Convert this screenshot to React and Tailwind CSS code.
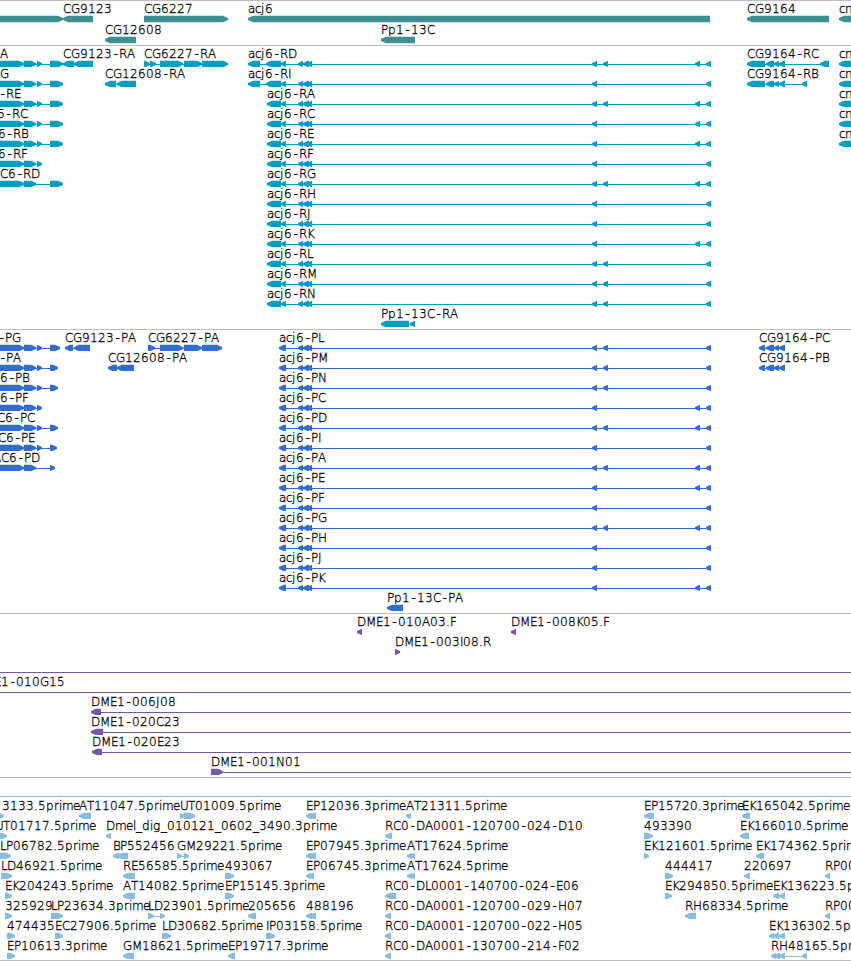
const LEFT = "left";
const RIGHT = "right";

// Horizontal advance of each label character, in pixels. Digits are 8.
const ADVANCE = {
  A: 8, B: 7, C: 8, D: 9, E: 7, F: 6, G: 9, H: 9, I: 3, J: 4, K: 7, L: 6, M: 10,
  N: 9, P: 7, R: 8, T: 7, U: 8, a: 7, c: 6, d: 8, e: 7, g: 8, i: 3, j: 4, l: 3,
  m: 11, n: 8, p: 8, r: 5, "-": 7, ".": 4, _: 6,
};

function charPositions(label, start) {
  let x = start;
  return [...label].map((char) => {
    // The hyphen is narrower than its slot, so it is centred in it.
    const current = char === "-" ? x + 1.5 : x;
    x += ADVANCE[char] ?? 8;
    return current;
  });
}

function left(label, x, ...blocks) {
  return { label, x, blocks, direction: LEFT };
}

function right(label, x, ...blocks) {
  return { label, x, blocks, direction: RIGHT };
}

const HEAD = [298, 303];
const MIDDLE = [[303, 309], [307, 312]];
const E1 = [592, 597];
const E2 = [603, 608];
const E3 = [695, 700];
const E4 = [706, 711];

function acj6Transcript(name, ...tail) {
  return left(`acj6-${name}`, 267, [267, 281], [281, 286], HEAD, ...MIDDLE, ...tail);
}

function acj6LongTranscript(name, ...tail) {
  return left(`acj6-${name}`, 248, [248, 260], [266, 281], [281, 286], HEAD, ...MIDDLE, ...tail);
}

function acj6Protein(name, ...tail) {
  return left(`acj6-${name}`, 279, [279, 286], [281, 286], HEAD, ...MIDDLE, ...tail);
}

const A = [-12, 24];
const B = [24, 36];
const C = [37, 42];

const cn = left("cn", 839, [839, 870]);

const genes = [
  [
    right("", 0, [-12, 63]),
    left("CG9123", 63, [63, 93]),
    right("CG6227", 144, [144, 228]),
    left("acj6", 248, [248, 710]),
    left("CG9164", 747, [747, 829]),
    cn,
  ],
  [left("CG12608", 105, [105, 136]), left("Pp1-13C", 381, [381, 415])],
];

const transcripts = [
  [
    right("A", 0, A, B, C, [50, 63]),
    left("CG9123-RA", 63, [63, 74], [74, 82], [78, 93]),
    right("CG6227-RA", 144, [144, 150], [150, 156], [160, 183], [184, 202], [202, 228]),
    acj6LongTranscript("RD", E1, E2, E3, E4),
    left("CG9164-RC", 747, [747, 765], [766, 774], [774, 779], [779, 785], [820, 829]),
    cn,
  ],
  [
    right("G", 0, A, B, C, [50, 63]),
    left("CG12608-RA", 105, [105, 116], [117, 125], [120, 136]),
    acj6LongTranscript("RI", E1, E4),
    left("CG9164-RB", 747, [747, 765], [766, 774], [774, 779], [779, 785], [802, 807]),
    cn,
  ],
  [right("-RE", -1, A, B, C, [50, 63]), acj6Transcript("RA", E1, E2, E3, E4), cn],
  [right("6-RC", -3, A, B, C, [50, 63]), acj6Transcript("RC", E1, E3, E4), cn],
  [right("6-RB", -2, A, B, C, [50, 63]), acj6Transcript("RE", E1, E3, E4), cn],
  [right("6-RF", -2, A, B, C), acj6Transcript("RF", E1, E4)],
  [right("AC6-RD", -8, A, B, [50, 63]), acj6Transcript("RG", E1, E2, E3, E4)],
  [acj6Transcript("RH", E1, E4)],
  [acj6Transcript("RJ", E1, E4)],
  [acj6Transcript("RK", E1, E3, E4)],
  [acj6Transcript("RL", E1, E2, E4)],
  [acj6Transcript("RM", E1, E2, E4)],
  [acj6Transcript("RN", E1, E2, E4)],
  [left("Pp1-13C-RA", 381, [381, 409], [410, 415])],
];

const proteins = [
  [
    right("-PG", -2, A, B, C, [50, 60]),
    left("CG9123-PA", 65, [65, 73], [74, 82], [78, 90]),
    right("CG6227-PA", 148, [148, 155], [160, 183], [184, 202], [202, 222]),
    acj6Protein("PL", E1, E2, E4),
    left("CG9164-PC", 759, [759, 765], [766, 774], [774, 779], [779, 785]),
  ],
  [
    right("-PA", -1, A, B, C, [50, 58]),
    left("CG12608-PA", 108, [108, 117], [117, 125], [121, 134]),
    acj6Protein("PM", E1, E2, E4),
    left("CG9164-PB", 759, [759, 765], [766, 774], [774, 779], [779, 785]),
  ],
  [right("6-PB", 0, A, B, C, [50, 58]), acj6Protein("PN", E1, E2, E4)],
  [right("6-PF", 0, A, B, C), acj6Protein("PC", E1, E3, E4)],
  [right("C6-PC", -3, A, B, C, [50, 58]), acj6Protein("PD", E1, E2, E3, E4)],
  [right("C6-PE", -2, A, B, C, [50, 57]), acj6Protein("PI", E1, E4)],
  [right("AC6-PD", -7, A, B, [50, 55]), acj6Protein("PA", E1, E2, E3, E4)],
  [acj6Protein("PE", E1, E3, E4)],
  [acj6Protein("PF", E1, E4)],
  [acj6Protein("PG", E1, E2, E3, E4)],
  [acj6Protein("PH", E1, E4)],
  [acj6Protein("PJ", E1, E4)],
  [acj6Protein("PK", E1, E3, E4)],
  [left("Pp1-13C-PA", 387, [387, 403])],
];

// Blocks outside of the view stretch the connecting line to its edges.
const BEFORE = [-30, -20];
const AFTER = [870, 880];

const clones = [
  [left("DME1-010A03.F", 357, [357, 362]), left("DME1-008K05.F", 511, [511, 516])],
  [right("DME1-003I08.R", 395, [395, 400])],
  [left("", 0, BEFORE, AFTER)],
  [left("E1-010G15", -6, BEFORE, AFTER)],
  [left("DME1-006J08", 91, [91, 101], AFTER)],
  [left("DME1-020C23", 91, [91, 103], AFTER)],
  [left("DME1-020E23", 92, [92, 102], AFTER)],
  [right("DME1-001N01", 211, [211, 223], AFTER)],
];

const ests = [
  [left("", 0, BEFORE, AFTER)],
  [
    right("3133.5prime", 2, [-5, 4]),
    left("AT11047.5prime", 79, [79, 91]),
    right("UT01009.5prime", 180, [180, 185], [184, 195]),
    left("EP12036.3prime", 306, [306, 312], [309, 316]),
    left("AT21311.5prime", 406, [406, 411]),
    left("EP15720.3prime", 644, [644, 654]),
    left("EK165042.5prime", 742, [742, 750]),
  ],
  [
    right("UT01717.5prime", -5, [-5, 7]),
    left("Dmel_dig_010121_0602_3490.3prime", 106, [106, 111]),
    left("RC0-DA0001-120700-024-D10", 385, [385, 392]),
    right("493390", 644, [644, 653]),
    left("EK166010.5prime", 740, [740, 749]),
  ],
  [
    right("LP06782.5prime", 0, [-5, 11]),
    left("BP552456", 113, [113, 119], [117, 128]),
    right("GM29221.5prime", 177, [177, 182], [184, 189]),
    left("EP07945.3prime", 306, [306, 312], [309, 316]),
    left("AT17624.5prime", 407, [407, 412], [410, 415]),
    right("EK121601.5prime", 644, [644, 649]),
    left("EK174362.5prime", 756, [756, 764]),
  ],
  [
    right("LD46921.5prime", 1, [1, 12]),
    left("RE56585.5prime", 123, [123, 135]),
    right("493067", 225, [225, 234]),
    left("EP06745.3prime", 306, [306, 311], [308, 314]),
    left("AT17624.5prime", 407, [407, 412], [410, 415]),
    right("444417", 665, [665, 673]),
    left("220697", 744, [744, 750]),
    left("RP00", 825, [825, 830]),
  ],
  [
    right("EK204243.5prime", 5, [5, 12]),
    left("AT14082.5prime", 123, [123, 135]),
    right("EP15145.3prime", 225, [225, 234]),
    left("RC0-DL0001-140700-024-E06", 385, [385, 396]),
    right("EK294850.5prime", 665, [665, 672]),
    left("EK136223.5prime", 773, [773, 779], [779, 785]),
  ],
  [
    right("325929", 5, [5, 12]),
    right("LP23634.3prime", 51, [51, 63]),
    right("LD23901.5prime", 148, [148, 154], [160, 165]),
    left("205656", 248, [248, 256]),
    left("488196", 306, [306, 312], [309, 316]),
    left("RC0-DA0001-120700-029-H07", 385, [385, 391]),
    left("RH68334.5prime", 685, [685, 696]),
    left("RP00", 825, [825, 830]),
  ],
  [
    right("474435", 7, [7, 15]),
    right("EC27906.5prime", 55, [55, 63]),
    right("LD30682.5prime", 162, [162, 171]),
    right("IP03158.5prime", 266, [266, 275]),
    left("RC0-DA0001-120700-022-H05", 385, [385, 391]),
    left("EK136302.5prime", 769, [769, 774], [773, 779], [779, 785]),
  ],
  [
    right("EP10613.3prime", 7, [7, 15]),
    left("GM18621.5prime", 123, [123, 134]),
    left("EP19717.3prime", 228, [228, 235]),
    left("RC0-DA0001-130700-214-F02", 385, [385, 391]),
    left("RH48165.5prime", 771, [771, 776], [774, 780], [779, 785], [802, 807]),
  ],
];

function arrowPath([start, end], direction) {
  const head = Math.min(5, end - start);
  if (direction === LEFT) {
    return `M${start} 16L${start + head} 13.8H${end}V20.2H${start + head}L${start} 18Z`;
  }
  return `M${end} 16L${end - head} 13.8H${start}V20.2H${end - head}L${end} 18Z`;
}

function Feature({ label, x, blocks, direction }) {
  const start = blocks[0][0];
  const end = blocks[blocks.length - 1][1];

  return (
    <g>
      {blocks.length > 1 ? <rect x={start + 2} y="17" width={end - start - 4} height="1" /> : null}
      {blocks.map((block, index) => (
        <path key={index} d={arrowPath(block, direction)} />
      ))}
      {label ? (
        <text
          x={charPositions(label, x).join(" ")}
          y="11"
          className="fill-black stroke-black stroke-[0.3px] text-[12px]"
        >
          {label}
        </text>
      ) : null}
    </g>
  );
}

function Track({ rows, className, rowClassName = "h-5" }) {
  return (
    <section className={`flex flex-col border-t border-[#bebebe] pt-px ${className}`}>
      {rows.map((features, index) => (
        <svg key={index} className={`block w-full shrink-0 fill-current ${rowClassName}`}>
          {features.map((feature) => (
            <Feature key={`${feature.label}${feature.x}`} {...feature} />
          ))}
        </svg>
      ))}
    </section>
  );
}

export default function App() {
  return (
    <main className="flex h-[961px] w-[851px] flex-col overflow-hidden border-b border-[#bebebe] bg-white font-['DejaVu_Sans',sans-serif] font-extralight">
      <Track rows={genes} className="pb-px text-[#3f8e94]" rowClassName="h-[21px]" />
      <Track rows={transcripts} className="pb-0.5 text-[#009ebf]" />
      <Track rows={proteins} className="pb-0.5 text-[#306dce]" />
      <Track rows={clones} className="pb-0.5 text-[#7657a8]" />
      <Track rows={ests} className="pb-px text-[#8abcdd]" />
    </main>
  );
}
